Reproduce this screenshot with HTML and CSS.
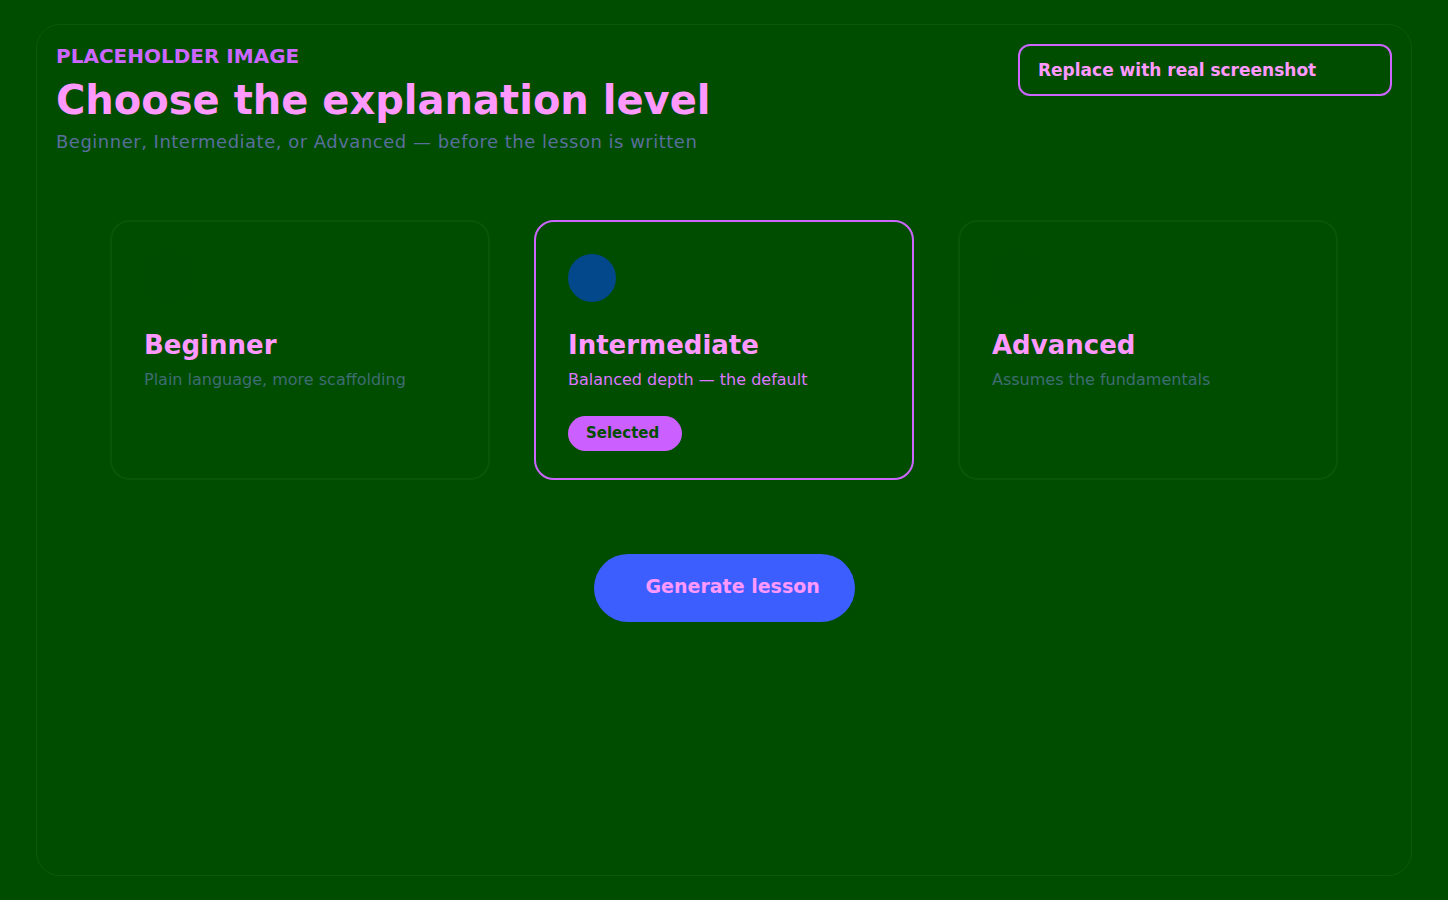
FILE: index.html
```html
<!DOCTYPE html>
<html lang="en">
<head>
<meta charset="utf-8">
<title>Choose the explanation level</title>
<link rel="stylesheet" href="styles.css">
</head>
<body>
<main class="panel">
  <header class="header">
    <div class="heading">
      <div class="eyebrow">PLACEHOLDER IMAGE</div>
      <h1 class="title">Choose the explanation level</h1>
      <p class="subtitle">Beginner, Intermediate, or Advanced — before the lesson is written</p>
    </div>
    <button class="replace-btn">Replace with real screenshot</button>
  </header>
  <section class="cards">
    <div class="card">
      <div class="dot"></div>
      <h2 class="card-title">Beginner</h2>
      <p class="card-desc">Plain language, more scaffolding</p>
    </div>
    <div class="card card-selected">
      <div class="dot"></div>
      <h2 class="card-title">Intermediate</h2>
      <p class="card-desc">Balanced depth — the default</p>
      <span class="pill">Selected</span>
    </div>
    <div class="card">
      <div class="dot"></div>
      <h2 class="card-title">Advanced</h2>
      <p class="card-desc">Assumes the fundamentals</p>
    </div>
  </section>
  <div class="actions">
    <button class="generate-btn">Generate lesson</button>
  </div>
</main>
</body>
</html>
```

FILE: styles.css
```css
* { box-sizing: border-box; }
html, body { margin: 0; padding: 0; }
body {
  background: #004d00;
  font-family: "DejaVu Sans", Verdana, sans-serif;
  padding: 24px 36px;
  height: 900px;
}
.panel {
  height: 852px;
  border: 1px solid #0a5a0a;
  border-radius: 24px;
  padding: 19px;
}
.header {
  display: flex;
  justify-content: space-between;
  align-items: flex-start;
}
.eyebrow {
  color: #cc66ff;
  font-weight: bold;
  font-size: 20px;
  line-height: 24px;
}
.title {
  margin: 8px 0 0;
  color: #ff99ff;
  font-size: 40px;
  font-weight: bold;
  line-height: 48px;
}
.subtitle {
  margin: 6px 0 0;
  color: #5a6e9c;
  font-size: 18px;
  line-height: 24px;
  letter-spacing: 0.5px;
}
.replace-btn {
  width: 374px;
  height: 52px;
  border: 2px solid #cc66ff;
  border-radius: 12px;
  background: transparent;
  color: #ff99ff;
  font-family: inherit;
  font-weight: bold;
  font-size: 17px;
  text-align: left;
  padding: 0 18px;
}
.cards {
  display: flex;
  justify-content: center;
  gap: 44px;
  margin-top: 66px;
}
.card {
  width: 380px;
  height: 260px;
  border: 2px solid #075707;
  border-radius: 20px;
  padding: 32px;
}
.card-selected {
  border-color: #cc66ff;
}
.dot {
  width: 48px;
  height: 48px;
  border-radius: 50%;
  background: #004c01;
}
.card-selected .dot { background: #03488a; }
.card-title {
  margin: 27px 0 0;
  color: #ff99ff;
  font-size: 26px;
  font-weight: bold;
  line-height: 32px;
}
.card-desc {
  margin: 9px 0 0;
  color: #3f6c72;
  font-size: 16px;
  line-height: 20px;
}
.card-selected .card-desc { color: #dd77ff; }
.pill {
  display: inline-block;
  margin-top: 26px;
  height: 35px;
  line-height: 35px;
  padding: 0 23px 0 18px;
  border-radius: 18px;
  background: #cc5fff;
  color: #004d00;
  font-weight: bold;
  font-size: 15px;
}
.actions {
  display: flex;
  justify-content: center;
  margin-top: 74px;
}
.generate-btn {
  height: 68px;
  width: 261px;
  border: none;
  border-radius: 34px;
  background: #3d5eff;
  color: #ff99ff;
  font-family: inherit;
  font-weight: bold;
  font-size: 19px;
  text-align: left;
  padding: 0 0 5px 52px;
}
```
